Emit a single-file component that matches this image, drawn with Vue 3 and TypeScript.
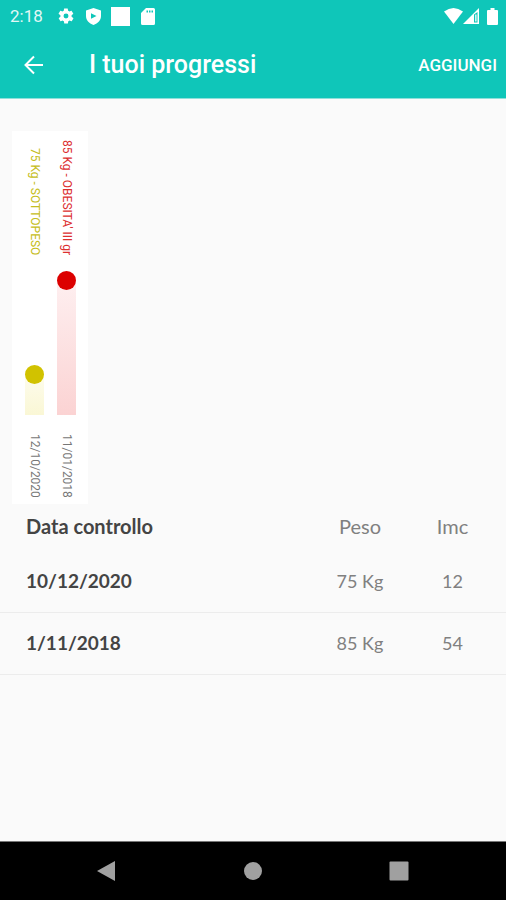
<script setup lang="ts">
interface Entry {
  label: string
  chartDate: string
  listDate: string
  weight: string
  bmi: number
  tone: string
  level: number
}

const entries: Entry[] = [
  { label: '75 Kg - SOTTOPESO', chartDate: '12/10/2020', listDate: '10/12/2020', weight: '75 Kg', bmi: 12, tone: 'under', level: 35 },
  { label: "85 Kg - OBESITA' III gr", chartDate: '11/01/2018', listDate: '1/11/2018', weight: '85 Kg', bmi: 54, tone: 'obese', level: 100 },
]
</script>

<template>
  <div class="screen">
    <header class="top">
      <div class="status">
        <span class="clock">2:18</span>
        <svg class="gear" viewBox="0 0 24 24" aria-hidden="true">
          <path fill-rule="evenodd" d="M19.4 13c.1-.3.1-.6.1-1s0-.7-.1-1l2.1-1.6c.2-.2.3-.4.1-.7l-2-3.4c-.1-.2-.4-.3-.6-.2l-2.5 1c-.5-.4-1.1-.7-1.7-1l-.4-2.6c0-.3-.2-.5-.5-.5h-4c-.2 0-.4.2-.5.4l-.4 2.7c-.6.2-1.1.6-1.7 1l-2.5-1c-.2-.1-.5 0-.6.2l-2 3.4c-.1.2-.1.5.1.7L4.600 11c-.1.3-.1.7-.1 1s0 .7.1 1l-2.1 1.6c-.2.2-.3.4-.1.7l2 3.4c.1.2.4.3.6.2l2.500-1c.5.4 1.100.7 1.700 1l.4 2.600c0 .3.2.5.5.5h4c.2 0 .5-.2.5-.4l.4-2.700c.6-.2 1.100-.6 1.700-1l2.500 1c.2.1.5 0 .6-.2l2-3.400c.1-.2.1-.5-.1-.7zM12 15.300a3.300 3.300 0 1 1 0-6.600 3.300 3.300 0 0 1 0 6.600z" />
        </svg>
        <svg class="shield" viewBox="0 0 15 17" aria-hidden="true">
          <path fill-rule="evenodd" d="M7.5 0 15 2.5V8c0 4-3 7.500-7.500 9C3 15.500 0 12 0 8V2.500zM5 5.300v5.400l5.500-2.700z" />
        </svg>
        <span class="block"></span>
        <svg class="card" viewBox="0 0 14 17" aria-hidden="true">
          <path fill-rule="evenodd" d="M5 0h7.500Q14 0 14 1.500v14Q14 17 12.500 17h-11Q0 17 0 15.500V5zM5.500 2.500v2h1.500v-2zm2.500 0v2h1.500v-2zm2.500 0v2h1.500v-2z" />
        </svg>
        <svg class="wifi" viewBox="0 0 19 16" aria-hidden="true">
          <path d="M0 3.500Q9.500-3.500 19 3.500L9.500 16z" />
        </svg>
        <svg class="signal" viewBox="0 0 16 16" aria-hidden="true">
          <path fill-rule="evenodd" d="M16 0v16H0zM11 6.500V14.500h3.500V4z" />
          <path d="M12.200 6.500h1.300v7h-1.300z" />
        </svg>
        <svg class="battery" viewBox="0 0 11 17" aria-hidden="true">
          <path d="M3.500 0h4v2H10q1 0 1 1v13q0 1-1 1H1q-1 0-1-1V3q0-1 1-1h2.500z" />
        </svg>
      </div>
      <div class="bar">
        <button class="back" type="button" aria-label="Indietro">
          <svg viewBox="0 0 20 20" aria-hidden="true"><path d="M19 10H2M10 1.500 1.500 10l8.500 8.500" /></svg>
        </button>
        <h1>I tuoi progressi</h1>
        <button class="add" type="button">AGGIUNGI</button>
      </div>
    </header>

    <main>
      <section class="chart">
        <div v-for="e in entries" :key="e.chartDate" class="series" :class="e.tone">
          <span class="label">{{ e.label }}</span>
          <div class="plot">
            <div class="column" :style="{ height: e.level + '%' }"><span class="dot"></span></div>
          </div>
          <span class="date">{{ e.chartDate }}</span>
        </div>
      </section>

      <table>
        <thead>
          <tr><th class="day" scope="col">Data controllo</th><th class="weight" scope="col">Peso</th><th class="bmi" scope="col">Imc</th></tr>
        </thead>
        <tbody>
          <tr v-for="e in entries" :key="e.listDate">
            <th class="day" scope="row">{{ e.listDate }}</th>
            <td class="weight">{{ e.weight }}</td>
            <td class="bmi">{{ e.bmi }}</td>
          </tr>
        </tbody>
      </table>
    </main>

    <nav>
      <button type="button" aria-label="Indietro"><svg viewBox="0 0 20 20" aria-hidden="true"><path d="M19 0v20L1 10z" /></svg></button>
      <button type="button" aria-label="Home"><svg viewBox="0 0 20 20" aria-hidden="true"><circle cx="10" cy="10" r="9" /></svg></button>
      <button type="button" aria-label="Recenti"><svg viewBox="0 0 20 20" aria-hidden="true"><rect x="0.500" y="0.500" width="19" height="19" rx="1" /></svg></button>
    </nav>
  </div>
</template>

<style>
body {
  margin: 0;
  background: #fafafa;
}
</style>

<style scoped>
.screen {
  display: flex;
  flex-direction: column;
  min-height: 100vh;
  background: #fafafa;
  font-family: Roboto, "Liberation Sans", sans-serif;
}
button {
  display: flex;
  align-items: center;
  justify-content: center;
  padding: 0;
  border: 0;
  background: none;
  color: inherit;
  font: inherit;
}
.top {
  background: #0fc6b9;
  color: #fff;
  border-bottom: 1px solid #8fe0da;
}
.status {
  display: flex;
  align-items: center;
  height: 32px;
  padding: 0 8px 0 10px;
}
.status svg {
  fill: #fff;
  flex: none;
}
.clock {
  width: 47px;
  font-size: 17px;
  line-height: 20px;
  color: #e2f8f6;
}
.gear {
  width: 18px;
  height: 18px;
  margin-right: 11px;
}
.shield {
  width: 15px;
  height: 17px;
  margin-right: 10px;
}
.block {
  width: 19px;
  height: 19px;
  margin-right: 11px;
  background: #fff;
}
.card {
  width: 14px;
  height: 17px;
}
.wifi {
  width: 19px;
  height: 16px;
  margin-left: auto;
}
.signal {
  width: 16px;
  height: 16px;
  margin-right: 8px;
}
.battery {
  width: 11px;
  height: 17px;
}
.bar {
  display: flex;
  align-items: center;
  height: 66px;
  padding: 0 9px 0 23px;
}
.back {
  width: 22px;
  height: 48px;
  margin-right: 44px;
}
.back svg {
  width: 20px;
  height: 20px;
  fill: none;
  stroke: #fff;
  stroke-width: 2;
}
h1 {
  margin: 0;
  font-size: 25px;
  line-height: 32px;
  font-weight: 500;
}
.add {
  height: 48px;
  margin-left: auto;
  font-size: 17px;
  font-weight: 500;
}
main {
  flex: 1;
}
.chart {
  display: flex;
  gap: 13px;
  width: fit-content;
  margin: 32px 12px 0;
  padding: 9px 12px 8px 13px;
  background: #fff;
}
.series {
  display: flex;
  flex-direction: column;
  align-items: center;
  width: 19px;
}
.label,
.date {
  writing-mode: vertical-rl;
  font-size: 12px;
  line-height: 16px;
  white-space: nowrap;
}
.label {
  margin-top: auto;
}
.date {
  height: 62px;
  color: #777;
}
.plot {
  display: flex;
  align-items: flex-end;
  height: 144px;
  margin: 16px 0 19px;
}
.column {
  width: 19px;
  border-radius: 10px 10px 0 0;
}
.dot {
  display: block;
  height: 19px;
  border-radius: 50%;
}
.under .label {
  color: #c5bd20;
}
.under .dot {
  background: #d1c200;
}
.under .column {
  background: linear-gradient(#fefdf2, #faf7d5);
}
.obese .label {
  color: #dc3030;
}
.obese .dot {
  background: #dc0000;
}
.obese .column {
  background: linear-gradient(#fef1f2, #fbd3d3);
}
table {
  width: 100%;
  border-collapse: collapse;
  table-layout: fixed;
  font-family: Lato, "Open Sans", sans-serif;
  font-size: 19px;
  line-height: 24px;
  color: #808080;
}
th,
td {
  padding: 0;
  font-weight: 400;
  text-align: center;
}
thead th {
  height: 43px;
  padding-bottom: 3px;
  font-size: 20px;
}
tbody tr {
  height: 62px;
  border-bottom: 1px solid #ececec;
}
.day {
  padding-left: 26px;
  font-weight: 700;
  text-align: left;
  color: #444;
}
.weight {
  width: 78px;
}
.bmi {
  width: 107px;
}
tbody .weight,
tbody .bmi {
  font-size: 18px;
}
nav {
  display: flex;
  justify-content: space-between;
  align-items: center;
  height: 58px;
  padding: 0 83px 0 82px;
  border-top: 1px solid #777;
  background: #000;
}
nav button {
  width: 48px;
  height: 48px;
}
nav svg {
  width: 20px;
  height: 20px;
  fill: #a0a0a0;
}
</style>
